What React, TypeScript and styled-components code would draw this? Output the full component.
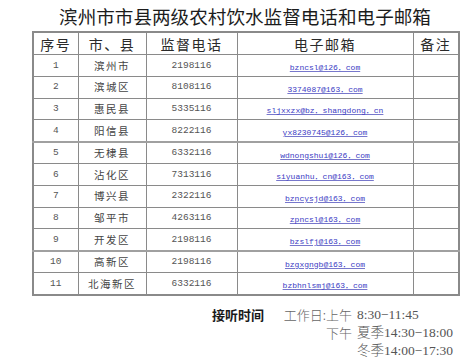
import React from 'react';
import styled, { createGlobalStyle } from 'styled-components';

interface Contact {
  no: number;
  area: string;
  phone: string;
  email: string;
  thick?: boolean;
}

const contacts: Contact[] = [
  { no: 1, area: '滨州市', phone: '2198116', email: 'bzncsl@126．com' },
  { no: 2, area: '滨城区', phone: '8108116', email: '3374087@163．com' },
  { no: 3, area: '惠民县', phone: '5335116', email: 'sljxxzx@bz．shangdong．cn' },
  { no: 4, area: '阳信县', phone: '8222116', email: 'yx8230745@126．com' },
  { no: 5, area: '无棣县', phone: '6332116', email: 'wdnongshui@126．com', thick: true },
  { no: 6, area: '沾化区', phone: '7313116', email: 'siyuanhu．cn@163．com' },
  { no: 7, area: '博兴县', phone: '2322116', email: 'bzncysjd@163．com' },
  { no: 8, area: '邹平市', phone: '4263116', email: 'zpncsl@163．com' },
  { no: 9, area: '开发区', phone: '2198116', email: 'bzslfj@163．com' },
  { no: 10, area: '高新区', phone: '2198116', email: 'bzgxgngb@163．com', thick: true },
  { no: 11, area: '北海新区', phone: '6332116', email: 'bzbhnlsmj@163．com' }
];

const GlobalStyle = createGlobalStyle`
  html, body {
    margin: 0;
    padding: 0;
    background: #fff;
  }
  body {
    font-family: "Noto Sans CJK SC", "Liberation Sans", sans-serif;
    color: #222;
  }
`;

function App() {
  return (
    <Page>
      <GlobalStyle />
      <Title>滨州市市县两级农村饮水监督电话和电子邮箱</Title>
      <Table>
        <colgroup>
          <col style={{ width: 45 }} />
          <col style={{ width: 68 }} />
          <col style={{ width: 91 }} />
          <col style={{ width: 176 }} />
          <col style={{ width: 46 }} />
        </colgroup>
        <thead>
          <tr>
            <HeadCell>序号</HeadCell>
            <HeadCell>市、县</HeadCell>
            <HeadCell>监督电话</HeadCell>
            <HeadCell>电子邮箱</HeadCell>
            <HeadCell>备注</HeadCell>
          </tr>
        </thead>
        <tbody>
          {contacts.map((c) => (
            <Row key={c.no} thick={c.thick}>
              <NumCell>{c.no}</NumCell>
              <AreaCell>{c.area}</AreaCell>
              <NumCell>{c.phone}</NumCell>
              <Cell>
                <Email>{c.email}</Email>
              </Cell>
              <Cell />
            </Row>
          ))}
        </tbody>
      </Table>
      <Hours>
        <HoursLabel>接听时间</HoursLabel>
        <HoursKey>工作日:上午</HoursKey>
        <HoursValue>8:30−11:45</HoursValue>
        <HoursKey>下午</HoursKey>
        <HoursValue>夏季14:30−18:00</HoursValue>
        <HoursKey />
        <HoursValue>冬季14:00−17:30</HoursValue>
      </Hours>
    </Page>
  );
}

const Page = styled.div`
  width: 474px;
  height: 360px;
  overflow: hidden;
  display: flex;
  flex-direction: column;
  padding-left: 32px;
  box-sizing: border-box;
`;

const Title = styled.h1`
  margin: 0;
  height: 35px;
  line-height: 31px;
  width: 426px;
  text-align: center;
  font-size: 18.6px;
  font-weight: 400;
  color: #1c1c1c;
`;

const Table = styled.table`
  width: 426px;
  table-layout: fixed;
  border-collapse: collapse;
  border: 2px solid #8a8a8a;
`;

const HeadCell = styled.th`
  height: 21px;
  padding: 0;
  border: 1px solid #8a8a8a;
  font-size: 14px;
  line-height: 16px;
  font-weight: 400;
  letter-spacing: 1.5px;
  color: #2a2a2a;
  text-align: center;
`;

const Row = styled.tr<{ thick?: boolean }>`
  ${(props) => props.thick && 'border-top: 2px solid #a0a0a0;'}
`;

const Cell = styled.td`
  height: 20.6px;
  padding: 0;
  border: 1px solid #8a8a8a;
  line-height: 12px;
  text-align: center;
  vertical-align: middle;
`;

const NumCell = styled(Cell)`
  font-family: "Liberation Mono", monospace;
  font-size: 9.5px;
  color: #555;
`;

const AreaCell = styled(Cell)`
  font-size: 10.5px;
  letter-spacing: 1.5px;
  color: #444;
`;

const Email = styled.span`
  font-family: "Liberation Mono", "Noto Sans CJK SC", monospace;
  font-size: 8px;
  color: #3b3bc4;
  text-decoration: underline;
  text-decoration-color: #7777cc;
`;

const Hours = styled.div`
  display: grid;
  grid-template-columns: 65px 76px auto;
  grid-auto-rows: 18px;
  align-items: center;
  margin: 10px 0 0 180px;
  font-size: 13px;
  line-height: 18px;
`;

const HoursLabel = styled.span`
  grid-row: span 3;
  align-self: start;
  font-weight: 700;
  color: #1a1a1a;
`;

const HoursKey = styled.span`
  justify-self: end;
  padding-right: 1px;
  font-weight: 300;
  color: #666;
`;

const HoursValue = styled.span`
  padding-left: 4px;
  font-family: "Liberation Serif", "Noto Sans CJK SC", serif;
  font-size: 13.5px;
  font-weight: 300;
  color: #555;
  white-space: nowrap;
`;

export default App;
